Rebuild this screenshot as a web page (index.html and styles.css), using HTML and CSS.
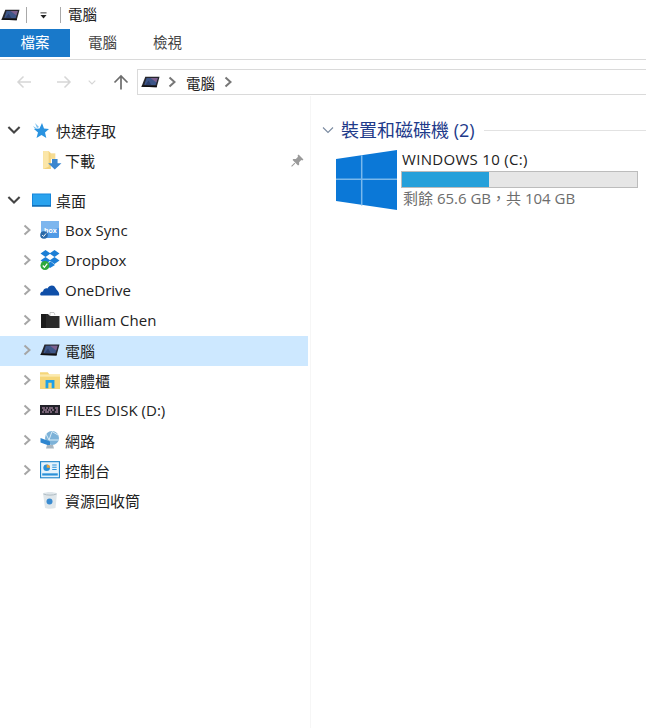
FILE: index.html
```html
<!DOCTYPE html>
<html lang="zh-Hant">
<head>
    <meta charset="UTF-8">
    <title>電腦</title>
    <link rel="stylesheet" href="styles.css">
</head>
<body>
    <svg class="defs" width="0" height="0">
        <symbol id="tablet" viewBox="0 0 20 12">
            <path d="M4.500 0.500 19.500 0.500 16.500 11.500 0.500 11 Z" fill="#26262c"/>
            <path d="M5.800 1.800 17.600 1.800 15.400 9.300 3.400 9.200 Z" fill="#3d5688"/>
            <path d="M10 1.800 17.600 1.800 16.200 6.500 Z" fill="#7c5f8e"/>
            <path d="M4.500 9.200 8 4.500 11 9.300 Z" fill="#2c3f6b"/>
            <path d="M0.500 11 16.500 11.500 16.800 10 1 9.600 Z" fill="#0e0e10"/>
        </symbol>
        <symbol id="chev-right" viewBox="0 0 10 12">
            <path d="M2.500 1.500 7.500 6 2.500 10.500" fill="none" stroke="currentColor" stroke-width="2"/>
        </symbol>
        <symbol id="chev-down" viewBox="0 0 12 10">
            <path d="M1.200 2.500 6 7.200 10.800 2.500" fill="none" stroke="currentColor" stroke-width="1.800"/>
        </symbol>
    </svg>

    <div class="titlebar">
        <svg class="tablet-icon"><use href="#tablet"/></svg>
        <span class="sep"></span>
        <svg class="qat-arrow" viewBox="0 0 8 7">
            <path d="M0.500 0.500H7.500" stroke="#222" fill="none"/>
            <path d="M0.500 3 7.500 3 4 6.800 Z" fill="#222"/>
        </svg>
        <span class="sep"></span>
        <span class="title">電腦</span>
    </div>

    <div class="tabs">
        <div class="tab tab-file">檔案</div>
        <div class="tab">電腦</div>
        <div class="tab">檢視</div>
    </div>

    <div class="addressrow">
        <svg class="nav-arrow back" viewBox="0 0 16 14">
            <path d="M15 7H2M7.500 1.500 2 7l5.500 5.500" fill="none" stroke="#d6d6d6" stroke-width="1.500"/>
        </svg>
        <svg class="nav-arrow forward" viewBox="0 0 16 14">
            <path d="M1 7H14M8.500 1.500 14 7l-5.500 5.500" fill="none" stroke="#d6d6d6" stroke-width="1.500"/>
        </svg>
        <svg class="recent" viewBox="0 0 8 5">
            <path d="M0.700 0.700 4 4 7.300 0.700" fill="none" stroke="#d6d6d6" stroke-width="1.200"/>
        </svg>
        <svg class="nav-arrow up" viewBox="0 0 16 16">
            <path d="M8 15.500V2M1.500 8.500 8 2l6.500 6.500" fill="none" stroke="#6d6d6d" stroke-width="1.700"/>
        </svg>
        <div class="addressbox">
            <svg class="tablet-icon"><use href="#tablet"/></svg>
            <svg class="crumb-chev"><use href="#chev-right"/></svg>
            <span class="crumb">電腦</span>
            <svg class="crumb-chev last"><use href="#chev-right"/></svg>
        </div>
    </div>

    <div class="main">
        <div class="nav">
            <div class="row">
                <svg class="expander down"><use href="#chev-down"/></svg>
                <svg class="icon" viewBox="0 0 20 18">
                    <path d="M3 2 7 6 5 7ZM1 5 5 7.500 3 8Z" fill="#7cc0ee"/>
                    <path d="M10 2 12 7.500 17 8 13 11.500 14.300 17 9.500 14 4.500 17 6 11.500 2 8 7.500 7.500Z" fill="#2a93e0"/>
                </svg>
                <span class="label">快速存取</span>
            </div>
            <div class="row indent-2">
                <svg class="icon" viewBox="0 0 18 18">
                    <path d="M1 1H6L8 3V17H1Z" fill="#f3d27c"/>
                    <path d="M1 1H6V15L1 17Z" fill="#fbe6a8"/>
                    <path d="M8 3H12V8H8Z" fill="#f6dc93"/>
                    <path d="M9 8H14V12H17.500L11.500 17.500 5.500 12H9Z" fill="#3b86cf"/>
                </svg>
                <span class="label">下載</span>
                <svg class="pin" viewBox="0 0 12 12">
                    <path d="M7 0.500 11.500 5 10.500 6 9.500 5.500 7.500 7.500 7.500 10 6.500 10.500 1.500 5.500 2 4.500 4.500 4.500 6.500 2.500 6 1.500Z" fill="#9a9a9a"/>
                    <path d="M3.500 8.500 0.500 11.500" stroke="#9a9a9a"/>
                </svg>
            </div>

            <div class="row group-start">
                <svg class="expander down"><use href="#chev-down"/></svg>
                <svg class="icon" viewBox="0 0 20 14">
                    <rect x="0" y="0.500" width="19" height="13" fill="#1586dc"/>
                    <rect x="1" y="1.500" width="17" height="10.500" fill="#2aa3ee"/>
                    <path d="M0 13H19" stroke="#0f5f9e"/>
                </svg>
                <span class="label">桌面</span>
            </div>
            <div class="row">
                <svg class="expander"><use href="#chev-right"/></svg>
                <svg class="icon" viewBox="0 0 20 18">
                    <rect x="1" y="0" width="18" height="17" rx="1" fill="#4f9ae6"/>
                    <path d="M1 0H19V7L1 11Z" fill="#7db6ee"/>
                    <text x="4" y="12" class="box-text">box</text>
                    <circle cx="4" cy="14" r="3.800" fill="#2b6aa8"/>
                    <path d="M2.200 14 3.600 15.500 6 12.500" stroke="#fff" fill="none"/>
                </svg>
                <span class="label">Box Sync</span>
            </div>
            <div class="row">
                <svg class="expander"><use href="#chev-right"/></svg>
                <svg class="icon" viewBox="0 0 20 20">
                    <path d="M5.500 0 10.500 3.500 5.500 7 0.500 3.500ZM14.500 0 19.500 3.500 14.500 7 9.500 3.500ZM5.500 7 10.500 10.500 5.500 14 0.500 10.500ZM14.500 7 19.500 10.500 14.500 14 9.500 10.500ZM10.500 11.500 15 15 10 18 6 15Z" fill="#1c7fd6"/>
                    <circle cx="5" cy="15.500" r="4.500" fill="#2ea83c"/>
                    <path d="M2.800 15.500 4.400 17.300 7.300 13.700" stroke="#fff" stroke-width="1.200" fill="none"/>
                </svg>
                <span class="label">Dropbox</span>
            </div>
            <div class="row">
                <svg class="expander"><use href="#chev-right"/></svg>
                <svg class="icon" viewBox="0 0 20 12">
                    <path d="M1 11.500C-0.500 11.500 0 7.500 3 7.500 3.500 4.500 6 4 7.500 4.500 9 1 14 0 15.500 4 17 7 20 8 19 11.500Z" fill="#0f4fa8"/>
                </svg>
                <span class="label">OneDrive</span>
            </div>
            <div class="row">
                <svg class="expander"><use href="#chev-right"/></svg>
                <svg class="icon" viewBox="0 0 20 18">
                    <path d="M10 5V1.500H14L15 4" fill="#fff" stroke="#bbb" stroke-width="0.800"/>
                    <path d="M1 3H8L10 5H19.500V17H1Z" fill="#2b2b2b"/>
                    <path d="M1 3H6V17H1Z" fill="#1c1c1c"/>
                </svg>
                <span class="label">William Chen</span>
            </div>
            <div class="row selected">
                <svg class="expander"><use href="#chev-right"/></svg>
                <svg class="tablet-icon tree-tablet"><use href="#tablet"/></svg>
                <span class="label">電腦</span>
            </div>
            <div class="row">
                <svg class="expander"><use href="#chev-right"/></svg>
                <svg class="icon" viewBox="0 0 18 16">
                    <path d="M0 1H7L8.500 3H18V16H0Z" fill="#f5d679"/>
                    <path d="M0 3H18V5H0Z" fill="#fbeaae"/>
                    <path d="M5 15.500V8H13V15.500H10.500V10.500H7.500V15.500Z" fill="#1ea0e8"/>
                </svg>
                <span class="label">媒體櫃</span>
            </div>
            <div class="row">
                <svg class="expander"><use href="#chev-right"/></svg>
                <svg class="icon" viewBox="0 0 20 10">
                    <rect width="20" height="10" fill="#22222a"/>
                    <path d="M2 3H5M6 3H8M9 3H13M15 3H18M3 5H7M8 5H11M12 5H14M16 5H18M2 7H4M5 7H9M10 7H12M15 7H18" stroke="#c9a0c0"/>
                </svg>
                <span class="label">FILES DISK (D:)</span>
            </div>
            <div class="row">
                <svg class="expander"><use href="#chev-right"/></svg>
                <svg class="icon" viewBox="0 0 20 18">
                    <circle cx="12" cy="7" r="7" fill="#7db2d8"/>
                    <path d="M6 3 9 9 12 0.500M9 9 18.500 9M12 0.500 18 4" stroke="#d8ecf7" fill="none"/>
                    <path d="M0.500 7 10 10.500 10 15 0.500 11.500Z" fill="#2f86cf"/>
                    <path d="M7 14 13 14 14 17.500 6 17.500Z" fill="#a9b6c0"/>
                </svg>
                <span class="label">網路</span>
            </div>
            <div class="row">
                <svg class="expander"><use href="#chev-right"/></svg>
                <svg class="icon" viewBox="0 0 18 16">
                    <rect x="0.500" y="0.500" width="17" height="14.500" fill="#e5f3fc" stroke="#1f86cc"/>
                    <circle cx="6" cy="6" r="3" fill="#2a90d8"/>
                    <path d="M6 6V3A3 3 0 0 1 9 6Z" fill="#eda33b"/>
                    <path d="M11 3.500H15M11 5.500H15M11 7.500H15" stroke="#2a90d8"/>
                    <path d="M2 12H16" stroke="#2a90d8" stroke-width="2"/>
                </svg>
                <span class="label">控制台</span>
            </div>
            <div class="row">
                <span class="expander"></span>
                <svg class="icon" viewBox="0 0 20 18">
                    <path d="M3 2.500C6 0.500 14 0.500 17 2.500L15.500 17C12 18 7.500 18 5 17Z" fill="#dfe6ea"/>
                    <path d="M3.500 3C7 4.500 13 4.500 16.500 3" stroke="#b0bcc3" fill="none"/>
                    <circle cx="9.500" cy="10.500" r="3" fill="#3a8bd0"/>
                </svg>
                <span class="label">資源回收筒</span>
            </div>
        </div>

        <div class="content">
            <div class="group-head">
                <svg class="group-chev" viewBox="0 0 12 8">
                    <path d="M1 1.500 6 6.500 11 1.500" fill="none" stroke="#7a8aa0" stroke-width="1.100"/>
                </svg>
                <span class="group-title">裝置和磁碟機 (2)</span>
                <span class="group-line"></span>
            </div>
            <div class="drive">
                <svg class="winlogo" viewBox="0 0 61 60">
                    <path d="M0 9 61 0V60L0 51Z" fill="#0b78d7"/>
                    <path d="M25.700 5.200V55.500M0 29.300H61" stroke="#79b8ec" stroke-width="1.500"/>
                </svg>
                <div class="drive-info">
                    <div class="drive-name">WINDOWS 10 (C:)</div>
                    <div class="drive-bar"><div class="drive-fill" style="width: 37%"></div></div>
                    <div class="drive-free">剩餘 65.6 GB，共 104 GB</div>
                </div>
            </div>
        </div>
    </div>
</body>
</html>
```

FILE: styles.css
```css
* {
    margin: 0;
    padding: 0;
    box-sizing: border-box;
}

html, body {
    height: 100%;
}

body {
    font-family: "Open Sans", "Noto Sans CJK TC", sans-serif;
    font-size: 15px;
    color: #222;
    background: white;
    overflow: hidden;
    display: flex;
    flex-direction: column;
}

.defs {
    position: absolute;
}

.tablet-icon {
    width: 19px;
    height: 12px;
    flex: none;
}

.titlebar {
    height: 29px;
    display: flex;
    align-items: center;
    padding-left: 1px;
}

.sep {
    width: 1px;
    height: 16px;
    background: #a9a9a9;
}

.titlebar .sep:nth-of-type(1) {
    margin-left: 6px;
}

.qat-arrow {
    width: 7px;
    height: 7px;
    margin: 2px 13px 0 13px;
}

.title {
    margin-left: 7px;
    font-size: 14.5px;
    line-height: 20px;
}

.tabs {
    height: 28px;
    display: flex;
    font-size: 14.5px;
}

.tab {
    width: 65px;
    line-height: 28px;
    text-align: center;
    color: #444;
}

.tab-file {
    width: 70px;
    background: #1979ca;
    color: white;
}

.addressrow {
    margin-top: 2px;
    height: 37px;
    border-top: 1px solid #dadada;
    padding-top: 9px;
    display: flex;
    align-items: flex-start;
}

.nav-arrow {
    width: 16px;
    height: 14px;
    margin-top: 6px;
}

.back {
    margin-left: 16px;
}

.forward {
    margin-left: 24px;
}

.recent {
    width: 8px;
    height: 5px;
    margin: 11px 0 0 16px;
}

.up {
    height: 16px;
    margin: 5px 0 0 17px;
}

.addressbox {
    margin-left: 8px;
    flex: 1;
    height: 26px;
    border: 1px solid #dadada;
    border-right: 0;
    display: flex;
    align-items: center;
    padding-left: 3px;
    font-size: 14.5px;
}

.crumb-chev {
    width: 10px;
    height: 12px;
    color: #777;
    margin-left: 7px;
}

.crumb-chev.last {
    margin-left: 8px;
}

.crumb {
    margin-left: 9px;
    color: #222;
}

.main {
    flex: 1;
    display: flex;
}

.nav {
    width: 311px;
    padding: 20px 2px 0 0;
    border-right: 1px solid #f6f6f6;
    flex: none;
}

.row {
    height: 30px;
    display: flex;
    align-items: center;
    padding-left: 7px;
    padding-bottom: 2px;
    position: relative;
}

.indent-2 {
    padding-left: 42px;
}

.indent-2 .label {
    margin-left: 3px;
}

.group-start {
    margin-top: 10px;
}

.selected {
    background: #cde8ff;
}

.expander {
    width: 14px;
    height: 12px;
    flex: none;
    color: #a6a6a6;
    margin-left: 13px;
    margin-right: 6px;
}

.expander.down {
    color: #444;
    margin-left: 0;
    margin-right: 11px;
}

.expander.down ~ .label {
    margin-left: 4px;
}

.icon {
    width: 20px;
    height: 20px;
    flex: none;
}

.tree-tablet {
    width: 20px;
}

.box-text {
    font-family: "Open Sans", sans-serif;
    font-size: 7px;
    font-weight: 700;
    fill: white;
}

.label {
    margin-left: 5px;
    white-space: nowrap;
    color: #222;
}

.pin {
    position: absolute;
    right: 4px;
    top: 8px;
    width: 13px;
    height: 13px;
}

.content {
    flex: 1;
    padding: 24px 0 0 11px;
}

.group-head {
    height: 20px;
    display: flex;
    align-items: center;
}

.group-chev {
    width: 12px;
    height: 8px;
    flex: none;
}

.group-title {
    margin-left: 7px;
    padding-bottom: 3px;
    font-size: 18px;
    color: #1e3a8a;
    white-space: nowrap;
}

.group-line {
    flex: 1;
    height: 1px;
    background: #e2e2e2;
    margin-left: 9px;
}

.drive {
    display: flex;
    margin: 10px 8px 0 14px;
}

.winlogo {
    width: 61px;
    height: 60px;
    flex: none;
}

.drive-info {
    flex: 1;
    margin-left: 4px;
}

.drive-name {
    padding-left: 1px;
    line-height: 18px;
    letter-spacing: 0.3px;
    color: #222;
}

.drive-bar {
    height: 17px;
    margin-top: 3px;
    background: #e6e6e6;
    border: 1px solid #bcbcbc;
}

.drive-fill {
    height: 100%;
    background: #26a0da;
}

.drive-free {
    padding-left: 2px;
    line-height: 20px;
    color: #6d6d6d;
}
```
